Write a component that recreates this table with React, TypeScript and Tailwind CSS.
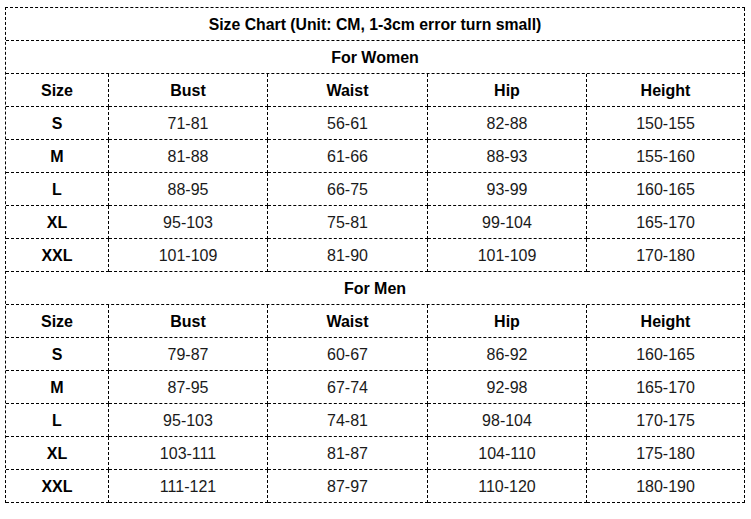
import React from "react";

const women = [
  ["S", "71-81", "56-61", "82-88", "150-155"],
  ["M", "81-88", "61-66", "88-93", "155-160"],
  ["L", "88-95", "66-75", "93-99", "160-165"],
  ["XL", "95-103", "75-81", "99-104", "165-170"],
  ["XXL", "101-109", "81-90", "101-109", "170-180"],
];
const men = [
  ["S", "79-87", "60-67", "86-92", "160-165"],
  ["M", "87-95", "67-74", "92-98", "165-170"],
  ["L", "95-103", "74-81", "98-104", "170-175"],
  ["XL", "103-111", "81-87", "104-110", "175-180"],
  ["XXL", "111-121", "87-97", "110-120", "180-190"],
];
const headers = ["Size", "Bust", "Waist", "Hip", "Height"];

const cell =
  "h-[33px] pt-[2px] flex items-center justify-center border-r border-b border-dashed border-black";

function Section({ title, rows }: { title: string; rows: string[][] }) {
  return (
    <>
      <div className={`${cell} col-span-5 font-bold`}>{title}</div>
      {headers.map((h) => (
        <div key={h} className={`${cell} font-bold`}>
          {h}
        </div>
      ))}
      {rows.map((r) =>
        r.map((v, i) => (
          <div key={r[0] + i} className={`${cell} ${i === 0 ? "font-bold" : "text-[#1a1a1a]"}`}>
            {v}
          </div>
        ))
      )}
    </>
  );
}

export default function App() {
  return (
    <div className="w-[751px] h-[519px] bg-white pt-[7px] pl-[5px] text-[16px] text-black" style={{ fontFamily: '"Liberation Sans", Arial, sans-serif' }}>
      <div className="w-[740px] grid grid-cols-[103px_159px_160px_159px_158px] border-l border-t border-dashed border-black">
        <div className={`${cell} col-span-5 font-bold text-[15.8px]`}>Size Chart (Unit: CM, 1-3cm error turn small)</div>
        <Section title="For Women" rows={women} />
        <Section title="For Men" rows={men} />
      </div>
    </div>
  );
}
